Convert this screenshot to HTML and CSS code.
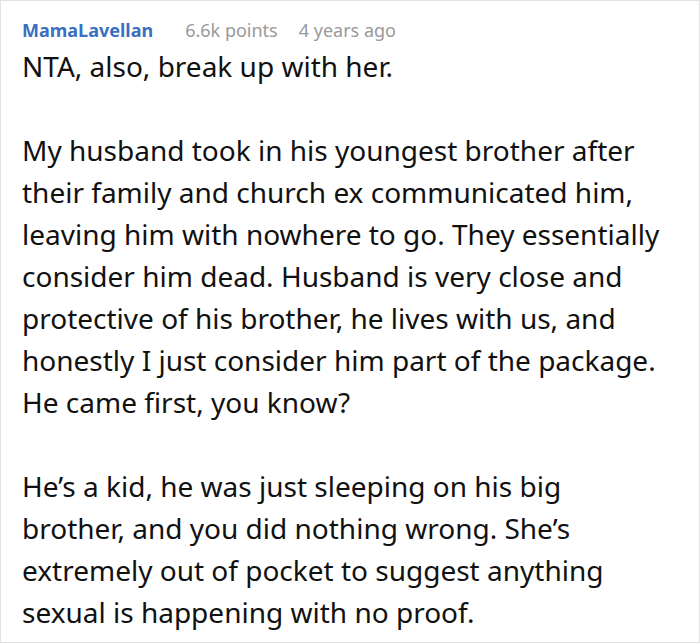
FILE: index.html
```html
<!DOCTYPE html>
<html lang="en">
<head>
<meta charset="utf-8">
<title>Comment</title>
<link rel="stylesheet" href="styles.css">
</head>
<body>
<div class="comment">
  <div class="comment-header">
    <span class="author">MamaLavellan</span>
    <span class="meta points">6.6k points</span>
    <span class="meta time">4 years ago</span>
  </div>
  <div class="comment-body">
    <p>NTA, also, break up with her.</p>
    <p>My husband took in his youngest brother after their family and church ex communicated him, leaving him with nowhere to go. They essentially consider him dead. Husband is very close and protective of his brother, he lives with us, and honestly I just consider him part of the package. He came first, you know?</p>
    <p>He’s a kid, he was just sleeping on his big brother, and you did nothing wrong. She’s extremely out of pocket to suggest anything sexual is happening with no proof.</p>
  </div>
</div>
</body>
</html>
```

FILE: styles.css
```css
html, body {
  margin: 0;
  padding: 0;
  background: #ffffff;
}

.comment {
  width: 700px;
  height: 643px;
  box-sizing: border-box;
  border: 1px solid #e2e2e2;
  padding: 17px 35px 0 21px;
  font-family: "Noto Sans", "Open Sans", sans-serif;
  color: #111111;
  overflow: hidden;
}

.comment-header {
  display: flex;
  align-items: baseline;
  font-size: 18px;
  line-height: 24px;
}

.author {
  font-weight: 700;
  color: #3a6fc2;
  margin-right: 32px;
}

.meta {
  color: #999999;
}

.points {
  margin-right: 21px;
}

.comment-body {
  margin-top: 3px;
  font-size: 28px;
  line-height: 42px;
}

.comment-body p {
  margin: 0 0 42px;
}

.comment-body p:last-child {
  margin-bottom: 0;
}
```
